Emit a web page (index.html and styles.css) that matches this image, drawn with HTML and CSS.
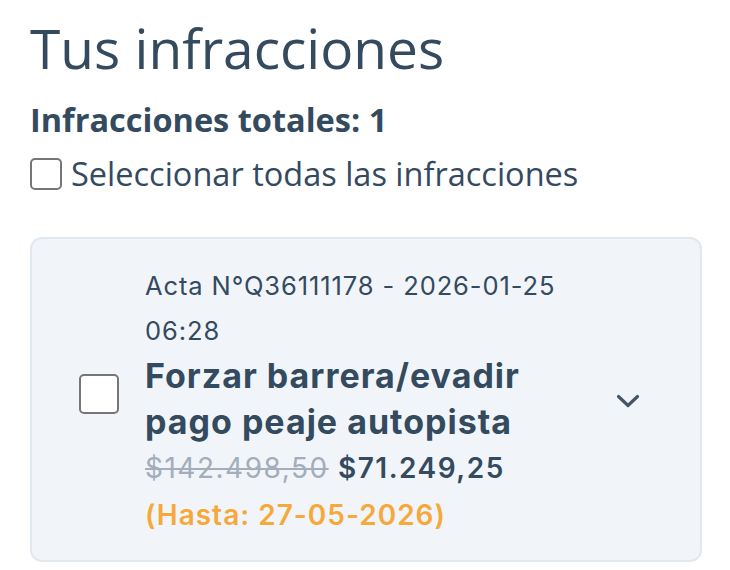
FILE: index.html
```html
<!DOCTYPE html>
<html lang="es">
<head>
    <meta charset="UTF-8">
    <meta name="viewport" content="width=device-width, initial-scale=1.0">
    <title>Tus infracciones</title>
    <link rel="stylesheet" href="styles.css">
</head>
<body>
    <main class="page">
        <h1 class="title">Tus infracciones</h1>
        <p class="total">Infracciones totales: 1</p>

        <label class="select-all">
            <input type="checkbox" class="check">
            <span>Seleccionar todas las infracciones</span>
        </label>

        <div class="fine-card">
            <input type="checkbox" class="check check-lg">
            <div class="fine-info">
                <p class="fine-meta">Acta N°Q36111178 - 2026-01-25 06:28</p>
                <p class="fine-name">Forzar barrera/evadir pago peaje autopista</p>
                <p class="fine-price"><s class="old-price">$142.498,50</s> <strong>$71.249,25</strong></p>
                <p class="fine-due">(Hasta: 27-05-2026)</p>
            </div>
            <svg class="chevron" width="24" height="14" viewBox="0 0 24 14">
                <polyline points="2.5,2.5 12,11.5 21.5,2.5" fill="none" stroke="currentColor" stroke-width="3.2" stroke-linecap="round" stroke-linejoin="round"/>
            </svg>
        </div>
    </main>
</body>
</html>
```

FILE: styles.css
```css
body {
    margin: 0;
    background: #ffffff;
    font-family: "Open Sans", "Noto Sans", sans-serif;
    color: #344a5e;
}

.page {
    padding: 14px 28px 0 30px;
}

.title {
    margin: 0;
    font-size: 55px;
    font-weight: 400;
    line-height: 68px;
}

.total {
    margin: 18px 0 0;
    font-size: 32.5px;
    font-weight: 700;
    line-height: 40px;
}

.select-all {
    display: flex;
    align-items: center;
    gap: 9px;
    margin-top: 12px;
    font-size: 32.5px;
    line-height: 44px;
}

.check {
    appearance: none;
    margin: 0;
    flex-shrink: 0;
    width: 32px;
    height: 32px;
    background: #ffffff;
    border: 2px solid #767676;
    border-radius: 5px;
}

.check-lg {
    width: 40px;
    height: 40px;
    margin-bottom: 14px;
}

.fine-card {
    display: flex;
    align-items: center;
    gap: 26px;
    margin-top: 41px;
    padding: 24px 60px 21px 47px;
    background: #f1f5f9;
    border: 2px solid #e2e8f0;
    border-radius: 12px;
    font-family: "Inter", "Open Sans", sans-serif;
}

.fine-info {
    flex: 1;
}

.fine-info p {
    margin: 0;
}

.fine-meta {
    font-size: 25.5px;
    letter-spacing: 0.9px;
    line-height: 45px;
}

.fine-name {
    font-size: 34px;
    font-weight: 700;
    letter-spacing: 1px;
    line-height: 46px;
}

.fine-price {
    font-size: 28px;
    letter-spacing: 1.5px;
    line-height: 47px;
}

.old-price {
    color: #a3adbb;
    text-decoration-thickness: 2px;
}

.fine-price strong {
    font-weight: 600;
}

.fine-due {
    font-size: 28px;
    font-weight: 600;
    letter-spacing: 1px;
    line-height: 47px;
    color: #f7a83a;
}

.chevron {
    flex-shrink: 0;
    margin-left: 15px;
    color: #475569;
}
```
